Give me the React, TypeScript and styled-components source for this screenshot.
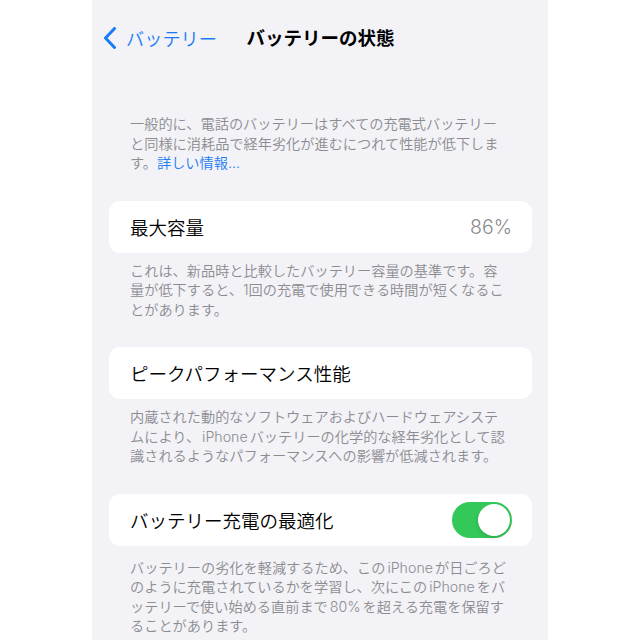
import React from 'react';
import styled, { createGlobalStyle } from 'styled-components';

const GlobalStyle = createGlobalStyle`
  html, body {
    margin: 0;
    padding: 0;
    background: #ffffff;
  }
  body {
    font-family: "Inter", "Noto Sans CJK JP", "Noto Sans", sans-serif;
    -webkit-font-smoothing: antialiased;
  }
`;

const Screen = styled.div`
  width: 456px;
  min-height: 640px;
  margin-left: 92px;
  background: #f2f2f7;
  box-sizing: border-box;
  padding: 0 16px 0 17px;
`;

const NavBar = styled.div`
  height: 76px;
  position: relative;
  display: flex;
  align-items: center;
  justify-content: center;
`;

const BackButton = styled.div`
  position: absolute;
  left: -6px;
  top: 0;
  height: 76px;
  display: flex;
  align-items: center;
  gap: 9px;
  color: #1a7cf4;
  font-size: 18.2px;
  font-weight: 350;
`;

const NavTitle = styled.div`
  font-size: 18.5px;
  font-weight: 700;
  color: #000;
  margin-top: -2px;
`;

const Footer = styled.div<{ $top: number }>`
  padding: ${p => p.$top}px 21px 0 21px;
  font-size: 14.2px;
  line-height: 19.5px;
  color: #8c8c90;
  font-weight: 350;
`;

const Line = styled.div`
  white-space: nowrap;
`;

const Link = styled.span`
  color: #1a7cf4;
`;

const Card = styled.div<{ $top: number }>`
  margin-top: ${p => p.$top}px;
  height: 52px;
  background: #ffffff;
  border-radius: 11px;
  display: flex;
  align-items: center;
  justify-content: space-between;
  padding: 0 20px 0 21px;
  box-sizing: border-box;
`;

const CardLabel = styled.span`
  font-size: 18.5px;
  color: #000;
  font-weight: 350;
`;

const CardValue = styled.span`
  font-size: 19.5px;
  color: #8a8a8e;
  font-weight: 350;
`;

const Toggle = styled.div<{ $on: boolean }>`
  width: 60px;
  height: 36px;
  border-radius: 18px;
  background: ${p => (p.$on ? '#34c759' : '#e9e9eb')};
  position: relative;
  flex-shrink: 0;
`;

const Knob = styled.div<{ $on: boolean }>`
  position: absolute;
  top: 2px;
  left: ${p => (p.$on ? '26px' : '2px')};
  width: 32px;
  height: 32px;
  border-radius: 50%;
  background: #fff;
  box-shadow: 0 2px 4px rgba(0, 0, 0, 0.15);
`;

const Latin = styled.span`
  margin: 0 2px;
`;

const Chevron = () => (
  <svg width="14" height="22" viewBox="0 0 14 22">
    <path d="M11.5 1.5 L2.5 11 L11.5 20.5" fill="none" stroke="#1a7cf4" strokeWidth="3" strokeLinecap="round" strokeLinejoin="round" />
  </svg>
);

export default function App() {
  return (
    <>
      <GlobalStyle />
      <Screen>
        <NavBar>
          <BackButton>
            <Chevron />
            <span>バッテリー</span>
          </BackButton>
          <NavTitle>バッテリーの状態</NavTitle>
        </NavBar>

        <Footer $top={38}>
          <Line>一般的に、電話のバッテリーはすべての充電式バッテリー</Line>
          <Line>と同様に消耗品で経年劣化が進むにつれて性能が低下しま</Line>
          <Line>す。<Link>詳しい情報...</Link></Line>
        </Footer>

        <Card $top={28}>
          <CardLabel>最大容量</CardLabel>
          <CardValue>86%</CardValue>
        </Card>
        <Footer $top={8}>
          <Line>これは、新品時と比較したバッテリー容量の基準です。容</Line>
          <Line>量が低下すると、1回の充電で使用できる時間が短くなるこ</Line>
          <Line>とがあります。</Line>
        </Footer>

        <Card $top={28}>
          <CardLabel>ピークパフォーマンス性能</CardLabel>
        </Card>
        <Footer $top={8}>
          <Line>内蔵された動的なソフトウェアおよびハードウェアシステ</Line>
          <Line>ムにより、<Latin>iPhone</Latin>バッテリーの化学的な経年劣化として認</Line>
          <Line>識されるようなパフォーマンスへの影響が低減されます。</Line>
        </Footer>

        <Card $top={28}>
          <CardLabel>バッテリー充電の最適化</CardLabel>
          <Toggle $on>
            <Knob $on />
          </Toggle>
        </Card>
        <Footer $top={12}>
          <Line>バッテリーの劣化を軽減するため、この<Latin>iPhone</Latin>が日ごろど</Line>
          <Line>のように充電されているかを学習し、次にこの<Latin>iPhone</Latin>をバ</Line>
          <Line>ッテリーで使い始める直前まで<Latin>80%</Latin>を超える充電を保留す</Line>
          <Line>ることがあります。</Line>
        </Footer>
      </Screen>
    </>
  );
}
